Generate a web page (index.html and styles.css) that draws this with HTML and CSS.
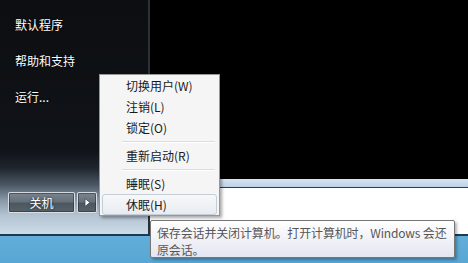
FILE: index.html
```html
<!DOCTYPE html>
<html>
<head>
<meta charset="utf-8">
<link rel="stylesheet" href="styles.css">
</head>
<body>
<div class="screen">
  <div class="main">
    <div class="panel">
      <ul class="links">
        <li>默认程序</li>
        <li>帮助和支持</li>
        <li>运行...</li>
      </ul>
      <div class="shutdown">
        <div class="btn power">关机</div>
        <div class="btn arrow">
          <svg width="7" height="9" viewBox="0 0 7 9"><polygon points="1,0.5 6,4.5 1,8.5" fill="#ffffff" stroke="#3a4650" stroke-width="0.8"/></svg>
        </div>
      </div>
    </div>
    <div class="desk">
      <div class="black"></div>
      <div class="wintop"></div>
      <div class="winbody"></div>
    </div>
  </div>
  <div class="taskbar"></div>

  <div class="menu">
    <div class="item">切换用户(W)</div>
    <div class="item">注销(L)</div>
    <div class="item">锁定(O)</div>
    <div class="sep"></div>
    <div class="item">重新启动(R)</div>
    <div class="sep"></div>
    <div class="item">睡眠(S)</div>
    <div class="item hover">休眠(H)</div>
  </div>

  <div class="tooltip">保存会话并关闭计算机。打开计算机时，Windows 会还原会话。</div>
</div>
</body>
</html>
```

FILE: styles.css
```css
* { box-sizing: border-box; }
html, body { margin: 0; padding: 0; }
body {
  width: 468px;
  height: 263px;
  overflow: hidden;
  background: #000;
  font-family: "Noto Sans CJK SC", "Microsoft YaHei", sans-serif;
  font-size: 12px;
}
.screen {
  position: relative;
  width: 468px;
  height: 263px;
  display: flex;
  flex-direction: column;
}
.main {
  display: flex;
  height: 234px;
}
.panel {
  width: 150px;
  display: flex;
  flex-direction: column;
  background: linear-gradient(to bottom,
    #0c0e11 0px, #101318 150px, #1f252c 168px, #4b5866 185px,
    #8797a6 200px, #b3c3d2 215px, #cddbe7 234px);
  border-right: 2px solid #2c3137;
}
.links {
  list-style: none;
  margin: 0;
  padding: 7px 0 0 15px;
  color: #ffffff;
}
.links li {
  height: 36px;
  line-height: 36px;
  text-shadow: 0 0 2px rgba(0,0,0,0.8);
}
.shutdown {
  margin-top: auto;
  padding: 0 0 21px 8px;
  display: flex;
  gap: 2px;
}
.btn {
  height: 21px;
  border: 1px solid rgba(235,240,245,0.85);
  border-radius: 2px;
  background: linear-gradient(to bottom, #7a858f 0%, #66717b 45%, #4c5760 55%, #56616a 100%);
  box-shadow: inset 0 0 0 1px rgba(30,40,50,0.5);
  color: #fff;
  display: flex;
  align-items: center;
  justify-content: center;
}
.power {
  width: 67px;
  text-shadow: 0 0 3px rgba(0,0,0,0.7);
}
.arrow {
  width: 20px;
}
.desk {
  flex: 1;
  display: flex;
  flex-direction: column;
}
.black {
  height: 179px;
  background: #000;
}
.wintop {
  height: 9px;
  background: linear-gradient(to bottom, #d6e4f1, #bcd2e8);
  border-bottom: 1px solid #2f3d4a;
}
.winbody {
  flex: 1;
  background: #ffffff;
}
.taskbar {
  flex: 1;
  border-top: 2px solid #1d3a55;
  background: linear-gradient(to bottom, #62aed9, #58a6d3);
}

.menu {
  position: absolute;
  left: 99px;
  top: 74px;
  width: 121px;
  background: #f5f5f5;
  border: 1px solid #979797;
  box-shadow: 2px 2px 3px rgba(0,0,0,0.35);
  padding: 0 2px;
  color: #1a1a1a;
}
.item {
  height: 21px;
  line-height: 20px;
  padding-left: 23px;
  border: 1px solid transparent;
  border-radius: 3px;
}
.item.hover {
  background: linear-gradient(to bottom, #f7f8fa, #e8ecf1);
  border-color: #c5ced8;
}
.sep {
  height: 7px;
  margin-left: 20px;
  margin-right: 2px;
  display: flex;
  flex-direction: column;
  justify-content: center;
}
.sep::before {
  content: "";
  display: block;
  height: 1px;
  background: #dcdcdc;
  border-bottom: 1px solid #ffffff;
  box-sizing: content-box;
}

.tooltip {
  position: absolute;
  left: 150px;
  top: 220px;
  width: 305px;
  height: 38px;
  padding: 3px 0 0 6px;
  border: 1px solid #767676;
  border-radius: 2px;
  background: linear-gradient(to bottom, #ffffff, #e4e5f0);
  box-shadow: 2px 2px 3px rgba(0,0,0,0.3);
  color: #575757;
  line-height: 17px;
  letter-spacing: -0.15px;
}
```
